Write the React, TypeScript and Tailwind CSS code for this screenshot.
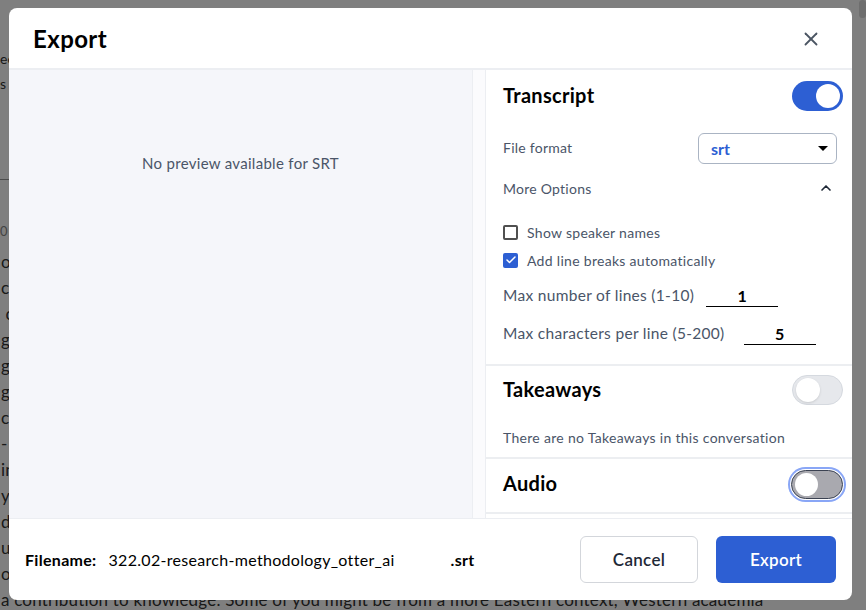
import { Check, ChevronUp, X } from 'lucide-react'

// left edges of the transcript lines that peek out from behind the dialog
const pageLines = ['oc', 'ch', ' c', 'go', 'go', 'go', 'co', '- i', 'in', 'y.', 'de', 'ut', 'of']

function Toggle({ mode }: { mode: 'on' | 'off' | 'focus' }) {
  if (mode === 'on') {
    return (
      <div className="flex h-[30px] w-[51px] items-center justify-end rounded-full bg-[#2d5fd3] pr-[3px]">
        <div className="h-[24px] w-[24px] rounded-full bg-white" />
      </div>
    )
  }
  if (mode === 'focus') {
    return (
      <div className="flex h-[29px] w-[52px] items-center rounded-full border border-[#3b4252] bg-[#a9a9af] pl-[3px] ring-2 ring-[#89a6f6] ring-offset-1">
        <div className="h-[23px] w-[23px] rounded-full bg-white" />
      </div>
    )
  }
  return (
    <div className="flex h-[30px] w-[51px] items-center rounded-full border border-[#d5d9df] bg-[#e6e8ec] pl-[3px]">
      <div className="h-[24px] w-[24px] rounded-full bg-white shadow-sm" />
    </div>
  )
}

export default function App() {
  return (
    <div className="relative h-[610px] w-[866px] overflow-hidden bg-white font-['Lato',sans-serif]">
      {/* page behind the dialog */}
      <div className="flex flex-col text-[#333]">
        <div className="mt-[50px] text-[14px] leading-[18px]">ee</div>
        <div className="mt-[7px] text-[14px] leading-[18px]">s</div>
        <div className="mt-[86px] h-px w-[30px] bg-[#999]" />
        <div className="mt-[43px] text-[13px] leading-[16px] text-[#888]">0</div>
        <div className="mt-[10px] flex flex-col">
          {pageLines.map((line, i) => (
            <div key={i} className="whitespace-pre pl-[1px] text-[17px] leading-[26px] tracking-[0.2px]">
              {line}
            </div>
          ))}
          <div className="whitespace-nowrap pl-[1px] text-[17px] leading-[26px] tracking-[0.2px]">
            a contribution to knowledge. Some of you might be from a more Eastern context, Western academia
          </div>
        </div>
      </div>

      <div className="absolute inset-0 bg-black/50">
        <div className="absolute right-0 top-0 h-[18px] w-[7px] rounded-full bg-[#6e6e6e]" />

        <div className="ml-[9px] mt-[8px] flex h-[592px] w-[843px] flex-col overflow-hidden rounded-lg bg-white">
          {/* header */}
          <div className="flex h-[62px] shrink-0 items-center justify-between border-b-2 border-[#eceef2] pl-[24px] pr-[30px]">
            <h1 className="mt-[2px] text-[24px] font-bold tracking-[0.4px] text-black">Export</h1>
            <X size={22} strokeWidth={2} className="mt-[2px] text-[#4b5563]" />
          </div>

          {/* body */}
          <div className="flex h-[448px] shrink-0">
            <div className="flex w-[463px] justify-center bg-[#f5f6fa] pt-[82px]">
              <span className="text-[15px] tracking-[0.3px] text-[#4a5568]">No preview available for SRT</span>
            </div>
            <div className="w-[14px] border-x border-[#eceef2] bg-[#fbfbfd]" />

            <div className="flex flex-1 flex-col overflow-hidden">
              {/* transcript */}
              <div className="flex flex-col border-b-2 border-[#eceef1] pb-[18px] pl-[17px] pr-[9px] pt-[11px]">
                <div className="flex h-[30px] items-center justify-between">
                  <span className="-mt-[3px] text-[20px] font-bold tracking-[0.3px] text-black">Transcript</span>
                  <Toggle mode="on" />
                </div>
                <div className="mt-[22px] flex h-[31px] items-center justify-between">
                  <span className="-mt-[2px] text-[14px] tracking-[0.25px] text-[#4a5568]">File format</span>
                  <div className="mr-[6px] flex h-[31px] w-[139px] items-center justify-between rounded-md border border-[#aab4c3] pl-[12px] pr-[8px]">
                    <span className="text-[16px] font-bold text-[#2d5fd3]">srt</span>
                    <span className="h-0 w-0 border-x-[5px] border-t-[5px] border-x-transparent border-t-black" />
                  </div>
                </div>
                <div className="mt-[14px] flex h-[20px] items-center justify-between">
                  <span className="text-[14px] tracking-[0.25px] text-[#4a5568]">More Options</span>
                  <ChevronUp size={16} strokeWidth={2.5} className="mr-[9px] text-[#1f2937]" />
                </div>
                <div className="mt-[25px] flex h-[18px] items-center gap-[9px]">
                  <div className="h-[15px] w-[15px] rounded-[2px] border-2 border-[#505050] bg-white" />
                  <span className="text-[14px] tracking-[0.3px] text-[#4a5568]">Show speaker names</span>
                </div>
                <div className="mt-[10px] flex h-[18px] items-center gap-[9px]">
                  <div className="flex h-[15px] w-[15px] items-center justify-center rounded-[2px] bg-[#2d5fd3]">
                    <Check size={12} strokeWidth={3} className="text-white" />
                  </div>
                  <span className="text-[14px] tracking-[0.3px] text-[#4a5568]">Add line breaks automatically</span>
                </div>
                <div className="mt-[15px] flex h-[24px] items-center gap-[12px]">
                  <span className="text-[15.5px] tracking-[0.3px] text-[#4a5568]">Max number of lines (1-10)</span>
                  <div className="flex h-[22px] w-[72px] items-center justify-center border-b border-black text-[16px] font-bold text-black">
                    1
                  </div>
                </div>
                <div className="mt-[14px] flex h-[24px] items-center gap-[19px]">
                  <span className="text-[15.5px] tracking-[0.3px] text-[#4a5568]">Max characters per line (5-200)</span>
                  <div className="flex h-[22px] w-[72px] items-center justify-center border-b border-black text-[16px] font-bold text-black">
                    5
                  </div>
                </div>
              </div>

              {/* takeaways */}
              <div className="flex flex-col border-b-2 border-[#eceef1] pb-[11px] pl-[17px] pr-[9px] pt-[9px]">
                <div className="flex h-[30px] items-center justify-between">
                  <span className="-mt-[3px] text-[20px] font-bold tracking-[0.3px] text-black">Takeaways</span>
                  <Toggle mode="off" />
                </div>
                <div className="mt-[23px] flex h-[18px] items-center">
                  <span className="text-[14px] tracking-[0.3px] text-[#4a5568]">There are no Takeaways in this conversation</span>
                </div>
              </div>

              {/* audio */}
              <div className="flex flex-col border-b-2 border-[#eceef1] pb-[12px] pl-[17px] pr-[9px] pt-[10px]">
                <div className="flex h-[31px] items-center justify-between">
                  <span className="-mt-[3px] text-[20px] font-bold tracking-[0.3px] text-black">Audio</span>
                  <Toggle mode="focus" />
                </div>
              </div>
            </div>
          </div>

          {/* footer */}
          <div className="flex flex-1 items-center justify-between border-t border-[#eceef2] pl-[16px] pr-[16px]">
            <div className="flex items-center gap-[12px] text-[16px] tracking-[0.3px] text-black">
              <span className="font-bold">Filename:</span>
              <span className="w-[330px]">322.02-research-methodology_otter_ai</span>
              <span className="font-bold">.srt</span>
            </div>
            <div className="flex items-center gap-[18px]">
              <button className="h-[47px] w-[118px] rounded-md border border-[#d3d6db] bg-white text-[17px] font-semibold tracking-[0.3px] text-[#1f2937]">
                Cancel
              </button>
              <button className="h-[47px] w-[120px] rounded-md bg-[#2d5fd3] text-[17px] font-semibold tracking-[0.3px] text-white">
                Export
              </button>
            </div>
          </div>
        </div>
      </div>
    </div>
  )
}
